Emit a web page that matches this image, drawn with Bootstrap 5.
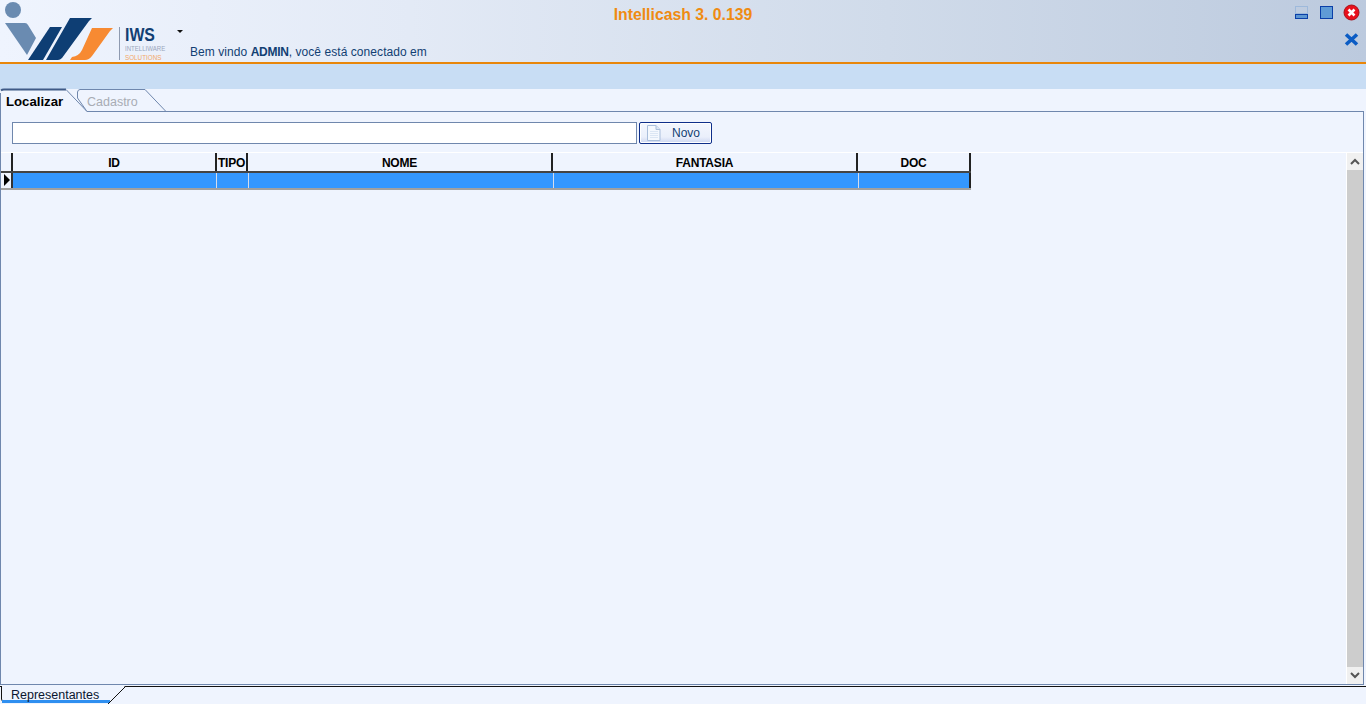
<!DOCTYPE html>
<html lang="pt">
<head>
<meta charset="utf-8">
<title>Intellicash</title>
<link href="https://cdn.jsdelivr.net/npm/bootstrap@5.3.0/dist/css/bootstrap.min.css" rel="stylesheet">
<style>
html,body{height:704px;overflow:hidden;margin:0}
body{font-family:"Liberation Sans",Arial,sans-serif;font-size:12px;background:#eff4fe;color:#000;line-height:1}
.app-head{height:62px;background:linear-gradient(90deg,#eff4fe 0,#e3eaf6 30%,#d0dbea 65%,#bccade 100%);position:relative}
.app-rule{height:2px;background:#e8860a}
.app-band{height:25px;background:#c8ddf4}
.logo-wrap{width:170px;height:62px;flex:none;position:relative}
.logo-iws{position:absolute;left:125px;top:25.5px;font:bold 18px/18px "Liberation Sans",sans-serif;color:#123f73;transform:scaleX(.88);transform-origin:left top}
.logo-l1,.logo-l2{position:absolute;left:125px;font-size:7.5px;line-height:8px;white-space:nowrap;transform-origin:left top}
.logo-l1{top:45px;color:#9aa6bb;transform:scaleX(.81)}
.logo-l2{top:53.5px;color:#f3a869;transform:scaleX(.84)}
.menu-caret{position:absolute;left:177px;top:30px;width:0;height:0;border-left:3px solid transparent;border-right:3px solid transparent;border-top:3px solid #111}
.welcome{position:absolute;left:190px;top:46px;color:#123f73;white-space:nowrap;letter-spacing:.06px}
.welcome b{letter-spacing:-.25px}
.app-title{position:absolute;left:0;right:0;top:7px;text-align:center;font-weight:700;font-size:15.8px;color:#ef8b12}
.win-ico{position:absolute}
.tab-strip{height:22px;position:relative;z-index:1}
.tab-a,.tab-b{position:relative;height:23px;flex:none}
.tab-a{width:77px}
.tab-b{width:90px}
.tab-a svg,.tab-b svg,.base-tab svg{position:absolute;left:0;top:0;overflow:visible}
.tab-a span{position:absolute;left:6px;top:6px;font-weight:700;font-size:13.2px}
.tab-b span{position:absolute;left:10px;top:7px;color:#a8acb4;font-size:12.5px}
.work-panel{height:574px;margin-right:2px;border:1px solid #6f87ad;background:#eff4fe;padding:10px 0 0 0;display:flex;flex-direction:column}
.search-row{height:22px;padding-left:11px;gap:2px}
.search-box{width:625px;height:22px;background:#fff;border:1px solid #6f87ad}
.novo-btn{width:73px;height:22px;border:1px solid #0f2f8a;border-radius:2px;background:linear-gradient(#f3f6fe 0,#eaeffb 70%,#ccd6f0 100%);color:#123f73;font-size:12px;padding:0;display:flex;align-items:center;box-shadow:inset 0 0 0 1px #fff}
.novo-btn svg{margin-left:7px}
.novo-btn span{margin-left:11px}
.grid-zone{flex:1;margin-top:8px;display:flex;min-height:0;border-top:1px solid #fff}
.grid-main{flex:1;min-width:0;border-right:1px solid #fff}
.g-head{display:flex;height:18px}
.g-row{display:flex;height:19px;width:970px;border-top:2px solid #444;border-bottom:2px solid #a0a0a0}
.gc{flex:none;height:100%;text-align:center;font-weight:700;padding-top:4px;white-space:nowrap;letter-spacing:-.2px}
.g-head .gc{border-right:2px solid #222}
.g-head .hc0{width:10px;border-right:0}
.g-head .hc1{width:206px;border-left:2px solid #222}
.g-head .hc2{width:31px}
.g-head .hc3{width:305px}
.g-head .hc4{width:305px}
.g-head .hc5{width:113px}
.g-row .gc{background:#3397ff;border-right:1px solid #d4dcec;padding:0}
.g-row .rc0{width:12px;background:#eff4fe;position:relative;border-right:2px solid #333}
.g-row .rc1{width:204px}
.g-row .rc2{width:32px}
.g-row .rc3{width:305px}
.g-row .rc4{width:305px}
.g-row .rc5{width:112px;border-right:2px solid #222}
.row-arrow{position:absolute;left:3px;top:1px;width:0;height:0;border-top:6px solid transparent;border-bottom:6px solid transparent;border-left:6px solid #000}
.v-scroll{width:16px;flex:none;display:flex;flex-direction:column;background:#f0f0f0}
.v-scroll .sb-btn{height:17px;flex:none;display:flex;align-items:center;justify-content:center}
.v-scroll .sb-thumb{flex:1;background:#cdcdcd}
.base-strip{height:18px;margin-top:1px;background:#eff4fe;border-top:1px solid #111;position:relative}
.base-tab{position:absolute;left:0;top:-1px;width:126px;height:18px}
.base-tab span{position:absolute;left:11px;top:3px;color:#0b1630;font-size:12.5px}
</style>
</head>
<body class="d-flex flex-column">
<header class="app-head">
  <div class="logo-wrap">
    <svg width="170" height="62" viewBox="0 0 170 62">
      <circle cx="13" cy="10" r="8" fill="#6a8bb1"/>
      <path d="M5 23 H25 Q27 23 28 25 L36 38 L27 55 Z" fill="#6a8bb1"/>
      <path d="M50 27 H62 L43 60 H28 Z" fill="#0e3e74"/>
      <path d="M70 18 H92 L89 21 L62 58 Q60 60 58 60 H46 Z" fill="#0e3e74"/>
      <path d="M92 28 H113 L110 31 L92 56 Q89 60 85 60 H70 L72 57 Q79 56 82 50 Z" fill="#f78a32"/>
      <rect x="119" y="27" width="1" height="33" fill="#8e9ab0"/>
    </svg>
    <span class="logo-iws">IWS</span>
    <span class="logo-l1">INTELLIWARE</span>
    <span class="logo-l2">SOLUTIONS</span>
  </div>
  <i class="menu-caret"></i>
  <div class="welcome">Bem vindo <b>ADMIN</b>, você está conectado em</div>
  <div class="app-title">Intellicash 3. 0.139</div>
  <svg class="win-ico" style="left:1295px;top:6px" width="14" height="14" viewBox="0 0 14 14"><rect x=".5" y=".5" width="12" height="7" fill="none" stroke="#7da6d6" stroke-dasharray="1 1"/><rect x=".5" y="8.5" width="12" height="4" fill="#5c96d2" stroke="#0a3fa8"/></svg>
  <svg class="win-ico" style="left:1320px;top:6px" width="14" height="14" viewBox="0 0 14 14"><rect x=".5" y=".5" width="12" height="12" fill="#5f9bd6" stroke="#0a3fa8"/></svg>
  <svg class="win-ico" style="left:1343px;top:4px" width="17" height="17" viewBox="0 0 17 17"><circle cx="8.5" cy="8.5" r="7.5" fill="#e8101c" stroke="#a81018"/><path d="M5.5 5.5 L11.5 11.5 M11.5 5.5 L5.5 11.5" stroke="#fff" stroke-width="2.6"/></svg>
  <svg class="win-ico" style="left:1344px;top:33px" width="15" height="13" viewBox="0 0 15 13"><path d="M2 1.5 L13 11.5 M13 1.5 L2 11.5" stroke="#0b5cc4" stroke-width="3.6"/></svg>
</header>
<div class="app-rule"></div>
<div class="app-band"></div>
<div class="tab-strip d-flex">
  <div class="tab-a">
    <svg width="77" height="23" viewBox="0 0 77 23"><path d="M1 23 V4 Q1 .5 4 .5 H66 L87 22.5 V23 Z" fill="#eff4fe"/><path d="M1 1.5 Q2 .5 4 .5 H66" fill="none" stroke="#3f5a86" stroke-width="2"/><path d="M66 .5 L87 22.5" stroke="#6f87ad" fill="none"/><path d="M.5 4 V23" stroke="#6f87ad"/></svg>
    <span>Localizar</span>
  </div>
  <div class="tab-b">
    <svg width="90" height="23" viewBox="0 0 90 23"><path d="M.5 9 V3 Q1 .5 3 .5 H68 L89 22.5 H10 Z" fill="#eff4fe" stroke="#6f87ad"/></svg>
    <span>Cadastro</span>
  </div>
</div>
<main class="work-panel">
  <div class="search-row d-flex">
    <div class="search-box"></div>
    <button type="button" class="novo-btn">
      <svg width="14" height="16" viewBox="0 0 14 16"><path d="M.5 .5 H9 L13 4.5 V15.5 H.5 Z" fill="#f4f8fe" stroke="#a9bedb"/><path d="M9 .5 V4.5 H13" fill="#dbe6f4" stroke="#a9bedb"/><path d="M3 6.5 H11 M3 8.5 H11 M3 10.5 H11 M3 12.5 H11" stroke="#dbe6f4"/></svg>
      <span>Novo</span>
    </button>
  </div>
  <div class="grid-zone">
    <div class="grid-main">
      <div class="g-head">
        <div class="gc hc0"></div>
        <div class="gc hc1">ID</div>
        <div class="gc hc2">TIPO</div>
        <div class="gc hc3">NOME</div>
        <div class="gc hc4">FANTASIA</div>
        <div class="gc hc5">DOC</div>
      </div>
      <div class="g-row">
        <div class="gc rc0"><i class="row-arrow"></i></div>
        <div class="gc rc1"></div>
        <div class="gc rc2"></div>
        <div class="gc rc3"></div>
        <div class="gc rc4"></div>
        <div class="gc rc5"></div>
      </div>
    </div>
    <div class="v-scroll">
      <div class="sb-btn"><svg width="10" height="7" viewBox="0 0 10 7"><path d="M1 6 L5 2 L9 6" fill="none" stroke="#555" stroke-width="2"/></svg></div>
      <div class="sb-thumb"></div>
      <div class="sb-btn"><svg width="10" height="7" viewBox="0 0 10 7"><path d="M1 1 L5 5 L9 1" fill="none" stroke="#555" stroke-width="2"/></svg></div>
    </div>
  </div>
</main>
<footer class="base-strip">
  <div class="base-tab">
    <svg width="126" height="18" viewBox="0 0 126 18"><path d="M1 0 V14 Q1 17 4 17 H108 L125 0 Z" fill="#eff4fe"/><path d="M1.5 0 V13 Q2 16 4 16" fill="none" stroke="#111"/><path d="M2 15.5 H110" stroke="#2f8ff0" stroke-width="3"/><path d="M108 18 L125.5 .5" stroke="#111"/></svg>
    <span>Representantes</span>
  </div>
</footer>
</body>
</html>
